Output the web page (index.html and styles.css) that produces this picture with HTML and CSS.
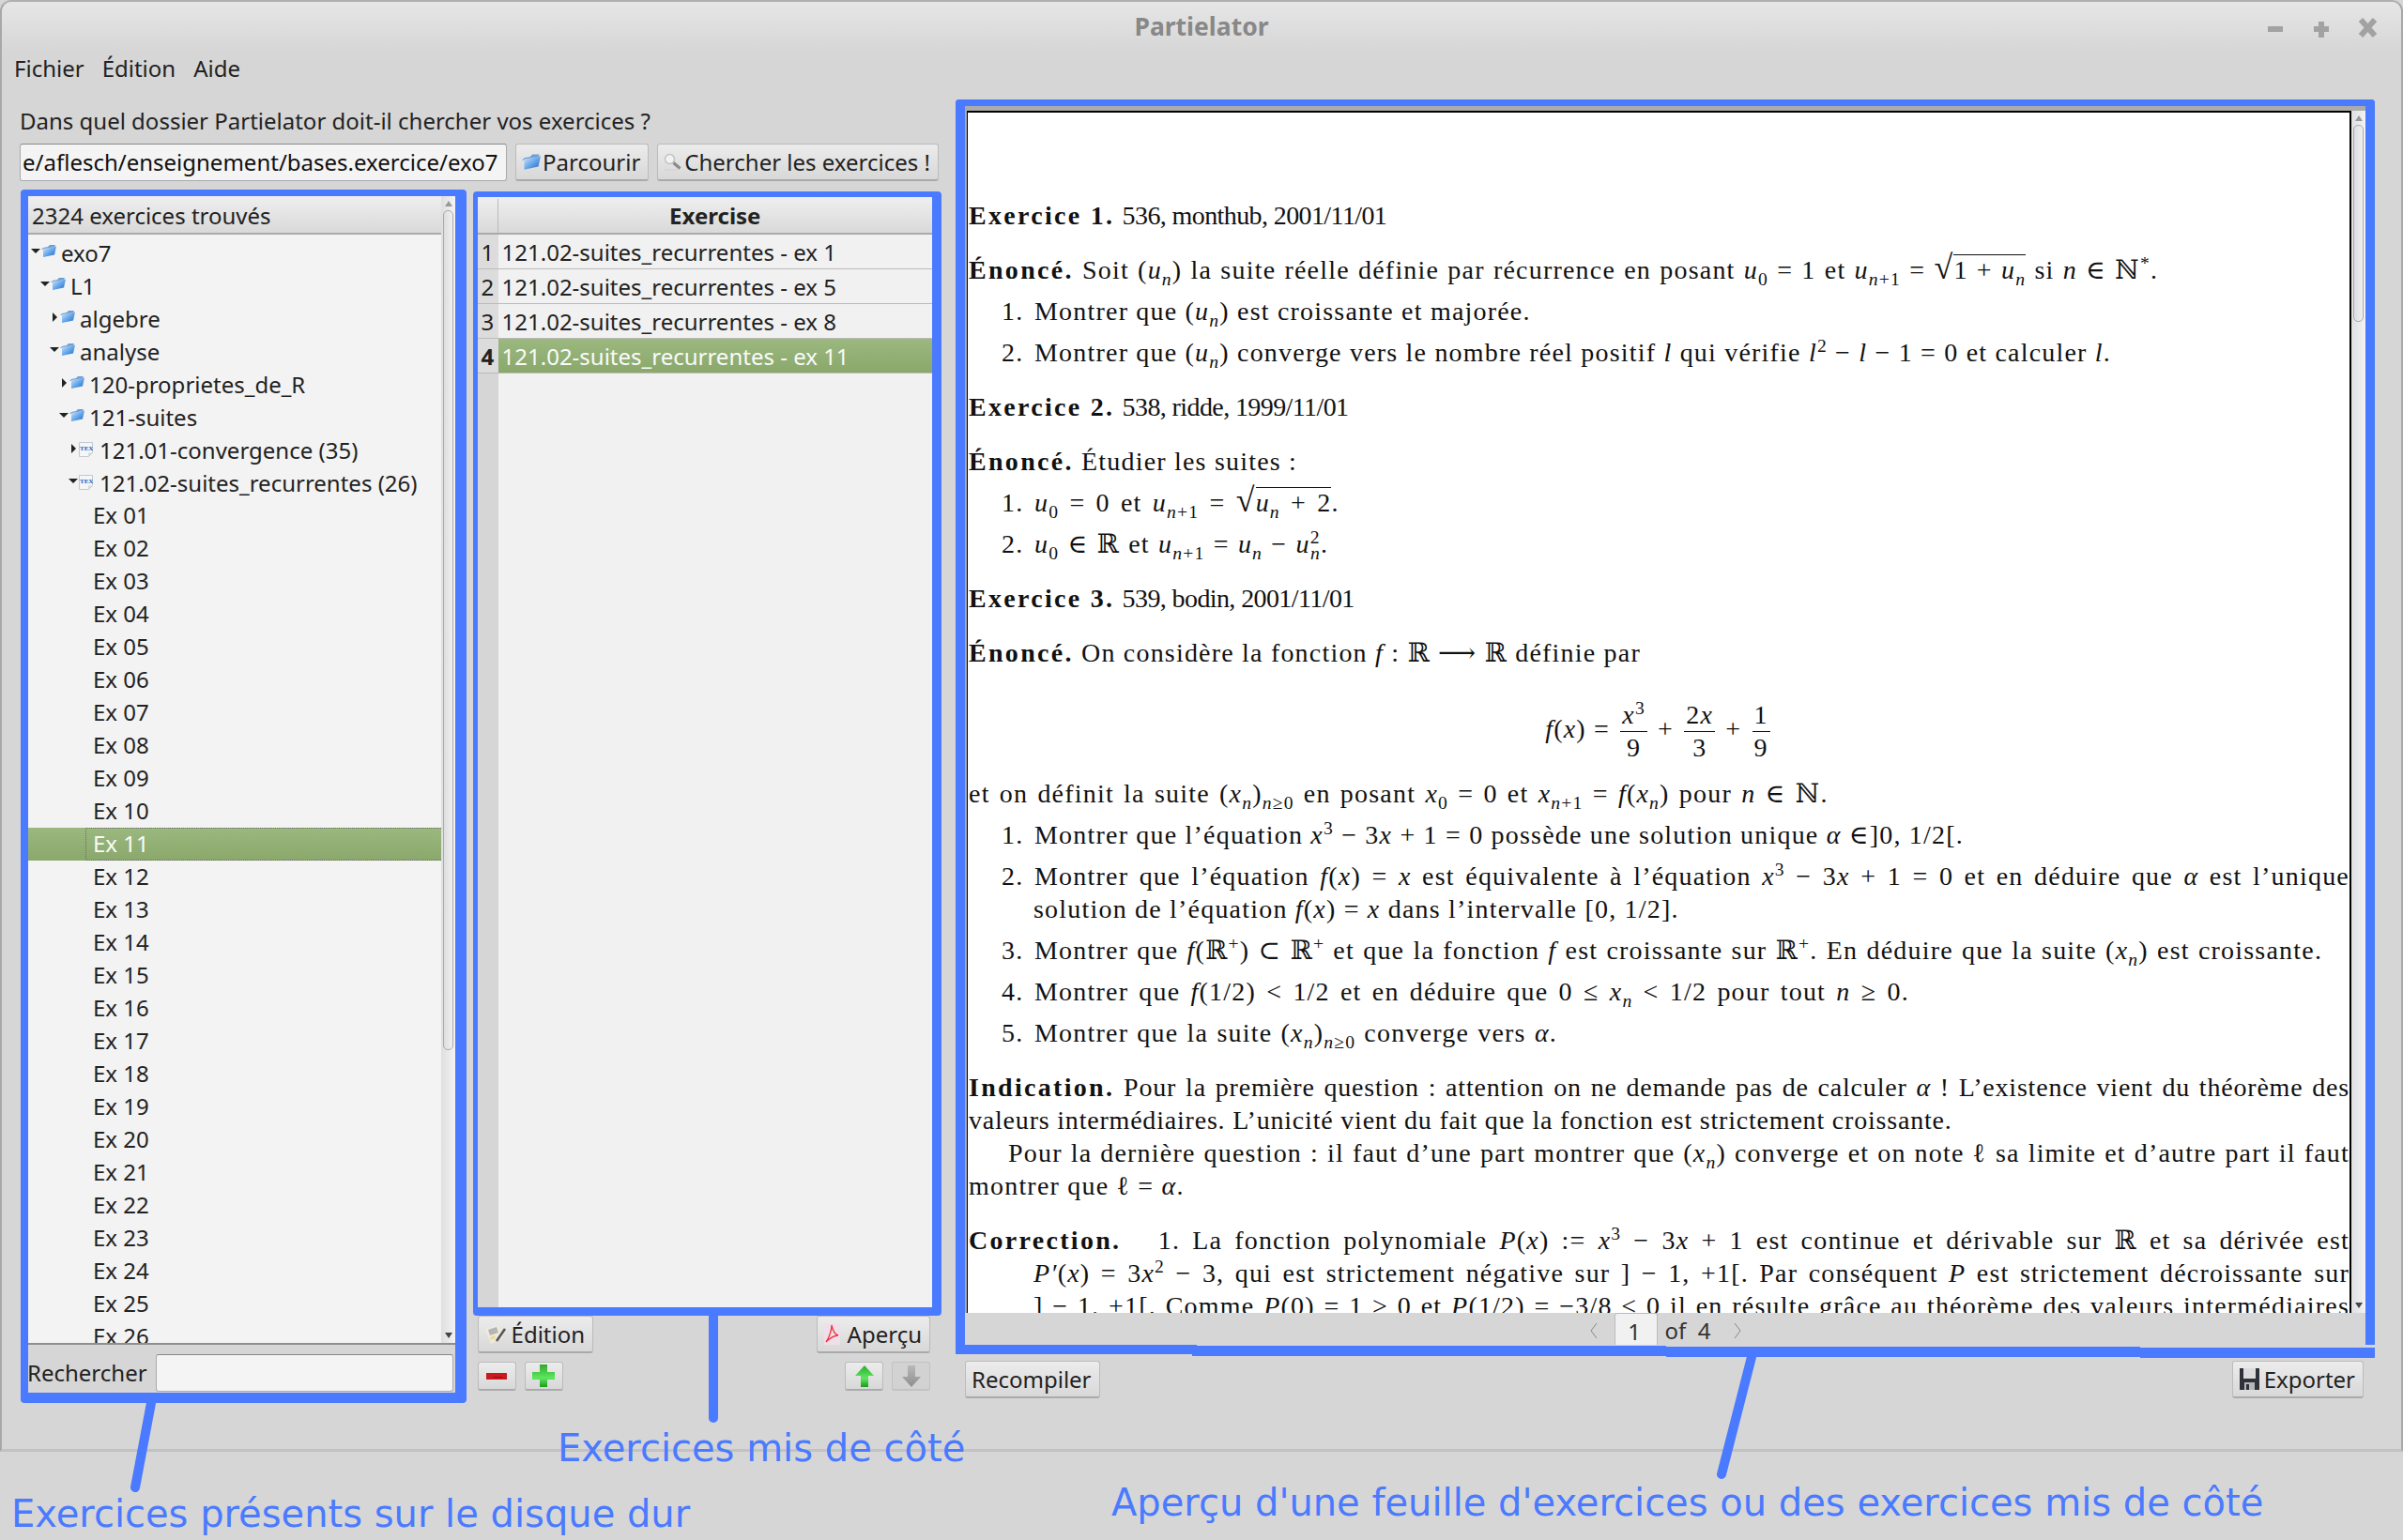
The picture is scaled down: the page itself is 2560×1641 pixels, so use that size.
FILE: index.html
```html
<!DOCTYPE html>
<html lang="fr">
<head>
    <meta charset="UTF-8">
    <title>Partielator</title>
    <link rel="stylesheet" href="styles.css">
</head>
<body>
    <svg class="defs" width="0" height="0">
        <defs>
            <linearGradient id="blue" x1="0" y1="0" x2="1" y2="1">
                <stop offset="0" stop-color="#d8eafc"/>
                <stop offset=".5" stop-color="#6aa8ea"/>
                <stop offset="1" stop-color="#1667c4"/>
            </linearGradient>
            <linearGradient id="green" x1="0" y1="0" x2="0" y2="1">
                <stop offset="0" stop-color="#2fa82f"/>
                <stop offset=".6" stop-color="#5ee85e"/>
                <stop offset="1" stop-color="#1c9a1c"/>
            </linearGradient>
            <linearGradient id="grey" x1="0" y1="0" x2="0" y2="1">
                <stop offset="0" stop-color="#b8b8b8"/>
                <stop offset="1" stop-color="#8e8e8e"/>
            </linearGradient>
            <symbol id="folder" viewBox="0 0 16 13">
                <path d="M0 5 2 3l5-1 2-2 6 0-1 2-8 2z" fill="#6d9fd6"/>
                <path d="M2 4 16 1.500l-2 9L2 13z" fill="url(#blue)"/>
            </symbol>
            <symbol id="doc" viewBox="0 0 15 16">
                <path d="M.5 .5h14v11l-4 4H.5z" fill="#f5f6f8" stroke="#c4c8d0"/>
                <path d="M14 11.500h-4v4z" fill="#d5d8de"/>
                <text x="1" y="9" class="tex">TEX</text>
            </symbol>
        </defs>
    </svg>

    <div class="window">
        <header class="titlebar">
            <span class="title">Partielator</span>
            <svg class="wm-buttons" viewBox="0 0 130 26">
                <path d="M0 13h16M49 13h16M57 5v17M99 3l15 17M114 3 99 20" />
            </svg>
        </header>
        <nav class="menubar"><span>Fichier</span><span>Édition</span><span>Aide</span></nav>

        <div class="columns">
            <div class="left-col">
                <div class="prompt">Dans quel dossier Partielator doit-il chercher vos exercices ?</div>
                <div class="path-row">
                    <div class="input path-input">e/aflesch/enseignement/bases.exercice/exo7</div>
                    <button class="btn"><svg class="ico ico-folder"><use href="#folder"/></svg>Parcourir</button>
                    <button class="btn btn-search">
                        <svg class="ico ico-lens" viewBox="0 0 20 20"><circle cx="6.500" cy="6.500" r="5" fill="#f2f2f2" stroke="#c2c2c2" stroke-width="1.500"/><path d="m10.500 10.500 7 6" stroke="#8a8a8a" stroke-width="3"/><path d="M1 18h13" stroke="#cfcfcf"/></svg>Chercher les exercices !
                    </button>
                </div>

                <div class="panels">
                    <section class="frame frame-tree">
                        <div class="tree-box">
                            <div class="tree">
                                <div class="tree-head">2324 exercices trouvés</div>
                                <div class="node d0"><i class="slot"><i class="tri open"></i></i><svg class="fi"><use href="#folder"/></svg>exo7</div>
                                <div class="node d1"><i class="slot"><i class="tri open"></i></i><svg class="fi"><use href="#folder"/></svg>L1</div>
                                <div class="node d2"><i class="slot"><i class="tri"></i></i><svg class="fi"><use href="#folder"/></svg>algebre</div>
                                <div class="node d2"><i class="slot"><i class="tri open"></i></i><svg class="fi"><use href="#folder"/></svg>analyse</div>
                                <div class="node d3"><i class="slot"><i class="tri"></i></i><svg class="fi"><use href="#folder"/></svg>120-proprietes_de_R</div>
                                <div class="node d3"><i class="slot"><i class="tri open"></i></i><svg class="fi"><use href="#folder"/></svg>121-suites</div>
                                <div class="node d4"><i class="slot"><i class="tri"></i></i><svg class="fi fi-doc"><use href="#doc"/></svg>121.01-convergence (35)</div>
                                <div class="node d4"><i class="slot"><i class="tri open"></i></i><svg class="fi fi-doc"><use href="#doc"/></svg>121.02-suites_recurrentes (26)</div>
                                <div class="leaf">Ex 01</div>
                                <div class="leaf">Ex 02</div>
                                <div class="leaf">Ex 03</div>
                                <div class="leaf">Ex 04</div>
                                <div class="leaf">Ex 05</div>
                                <div class="leaf">Ex 06</div>
                                <div class="leaf">Ex 07</div>
                                <div class="leaf">Ex 08</div>
                                <div class="leaf">Ex 09</div>
                                <div class="leaf">Ex 10</div>
                                <div class="leaf selected"><span class="focus">Ex 11</span></div>
                                <div class="leaf">Ex 12</div>
                                <div class="leaf">Ex 13</div>
                                <div class="leaf">Ex 14</div>
                                <div class="leaf">Ex 15</div>
                                <div class="leaf">Ex 16</div>
                                <div class="leaf">Ex 17</div>
                                <div class="leaf">Ex 18</div>
                                <div class="leaf">Ex 19</div>
                                <div class="leaf">Ex 20</div>
                                <div class="leaf">Ex 21</div>
                                <div class="leaf">Ex 22</div>
                                <div class="leaf">Ex 23</div>
                                <div class="leaf">Ex 24</div>
                                <div class="leaf">Ex 25</div>
                                <div class="leaf">Ex 26</div>
                            </div>
                            <div class="scrollbar tree-scroll"><i class="arrow up"></i><i class="thumb"></i><i class="arrow down"></i></div>
                        </div>
                        <div class="search-row">
                            <span>Rechercher</span>
                            <div class="input search-input"></div>
                        </div>
                    </section>

                    <div class="side">
                        <section class="frame frame-list">
                            <div class="list-head"><i class="corner"></i><b>Exercise</b></div>
                            <div class="list-row"><span class="num">1</span><span class="cell">121.02-suites_recurrentes - ex 1</span></div>
                            <div class="list-row"><span class="num">2</span><span class="cell">121.02-suites_recurrentes - ex 5</span></div>
                            <div class="list-row"><span class="num">3</span><span class="cell">121.02-suites_recurrentes - ex 8</span></div>
                            <div class="list-row current"><span class="num">4</span><span class="cell">121.02-suites_recurrentes - ex 11</span></div>
                            <div class="list-rest"><i class="corner"></i></div>
                        </section>
                        <div class="side-buttons">
                            <div class="side-col">
                                <button class="btn">
                                    <svg class="ico ico-edit" viewBox="0 0 24 24"><path d="M1 6 15 1l5 14-13 7z" fill="#eeeade"/><path d="M4 7l9-3 2 6-9 3z" fill="#b5b5b5"/><path d="M6 15l5-2 1 3-5 2z" fill="#ecdc8c"/><path d="m13 19 9-13" stroke="#555" stroke-width="2.500"/></svg>Édition
                                </button>
                                <div class="mini-row">
                                    <button class="mini"><svg class="mini-minus" viewBox="0 0 22 7"><path d="M0 0h22v7H0z" fill="#c9191f"/><path d="M8 4h9v1H8z" fill="#8d0d10"/></svg></button>
                                    <button class="mini"><svg class="mini-plus" viewBox="0 0 24 24"><path d="M8 0h8v8h8v8h-8v8H8v-8H0V8h8z" fill="url(#green)"/></svg></button>
                                </div>
                            </div>
                            <div class="side-col side-col-right">
                                <button class="btn">
                                    <svg class="ico ico-pdf" viewBox="0 0 17 23"><path d="M0 0h17v23H0z" fill="#f0dfea"/><path d="M8 2c0 6-3 14-6 18 3-3 7-7 13-7-4-1-6-6-7-11z" fill="none" stroke="#ee3a3e" stroke-width="1.300"/></svg>Aperçu
                                </button>
                                <div class="mini-row">
                                    <button class="mini"><svg class="mini-arrow" viewBox="0 0 20 23"><path d="M10 0l10 11h-6v12H6V11H0z" fill="url(#green)"/></svg></button>
                                    <button class="mini mini-off"><svg class="mini-arrow" viewBox="0 0 20 23"><path d="M10 23 0 12h6V0h8v12h6z" fill="url(#grey)"/></svg></button>
                                </div>
                            </div>
                        </div>
                    </div>
                </div>
            </div>

            <div class="right-col">
                <section class="frame-pdf">
                    <div class="pdf-wrap">
                        <div class="pdf-page">
                            <p class="ln gap-first"><b>Exercice 1.</b> <span class="meta">536, monthub, 2001/11/01</span></p>
                            <p class="ln g-sec ws1"><b>Énoncé.</b> Soit (<i>u<sub>n</sub></i>) la suite réelle définie par récurrence en posant <i>u</i><sub>0</sub> = 1 et <i>u<sub>n</sub></i><sub>+1</sub> = <span class="sqrt"><span class="radical">√</span><span class="rad">1 + <i>u<sub>n</sub></i></span></span> si <i>n</i> ∈ ℕ<sup>*</sup>.</p>
                            <p class="ln item g-item"><span class="n">1.</span>Montrer que (<i>u<sub>n</sub></i>) est croissante et majorée.</p>
                            <p class="ln item g-item"><span class="n">2.</span>Montrer que (<i>u<sub>n</sub></i>) converge vers le nombre réel positif <i>l</i> qui vérifie <i>l</i><sup>2</sup> − <i>l</i> − 1 = 0 et calculer <i>l</i>.</p>
                            <p class="ln g-sec"><b>Exercice 2.</b> <span class="meta">538, ridde, 1999/11/01</span></p>
                            <p class="ln g-sec"><b>Énoncé.</b> Étudier les suites :</p>
                            <p class="ln item g-item ws3"><span class="n">1.</span><i>u</i><sub>0</sub> = 0 et <i>u<sub>n</sub></i><sub>+1</sub> = <span class="sqrt"><span class="radical">√</span><span class="rad"><i>u<sub>n</sub></i> + 2</span></span>.</p>
                            <p class="ln item g-item ws1"><span class="n">2.</span><i>u</i><sub>0</sub> ∈ ℝ et <i>u<sub>n</sub></i><sub>+1</sub> = <i>u<sub>n</sub></i> − <i>u</i><sup>2</sup><sub class="tight"><i>n</i></sub>.</p>
                            <p class="ln g-sec"><b>Exercice 3.</b> <span class="meta">539, bodin, 2001/11/01</span></p>
                            <p class="ln g-sec"><b>Énoncé.</b> On considère la fonction <i>f</i> : ℝ ⟶ ℝ définie par</p>
                            <div class="display"><i>f</i>(<i>x</i>) = <span class="frac"><span><i>x</i><sup>3</sup></span><span>9</span></span> + <span class="frac"><span>2<i>x</i></span><span>3</span></span> + <span class="frac"><span>1</span><span>9</span></span></div>
                            <p class="ln g-after ws2">et on définit la suite (<i>x<sub>n</sub></i>)<sub><i>n</i>≥0</sub> en posant <i>x</i><sub>0</sub> = 0 et <i>x<sub>n</sub></i><sub>+1</sub> = <i>f</i>(<i>x<sub>n</sub></i>) pour <i>n</i> ∈ ℕ.</p>
                            <p class="ln item g-item"><span class="n">1.</span>Montrer que l’équation <i>x</i><sup>3</sup> − 3<i>x</i> + 1 = 0 possède une solution unique <i>α</i> ∈]0, 1/2[.</p>
                            <p class="ln item just g-item"><span class="n">2.</span>Montrer que l’équation <i>f</i>(<i>x</i>) = <i>x</i> est équivalente à l’équation <i>x</i><sup>3</sup> − 3<i>x</i> + 1 = 0 et en déduire que <i>α</i> est l’unique</p>
                            <p class="ln item cont">solution de l’équation <i>f</i>(<i>x</i>) = <i>x</i> dans l’intervalle [0, 1/2].</p>
                            <p class="ln item g-item ws1"><span class="n">3.</span>Montrer que <i>f</i>(ℝ<sup>+</sup>) ⊂ ℝ<sup>+</sup> et que la fonction <i>f</i> est croissante sur ℝ<sup>+</sup>. En déduire que la suite (<i>x<sub>n</sub></i>) est croissante.</p>
                            <p class="ln item g-item ws3"><span class="n">4.</span>Montrer que <i>f</i>(1/2) &lt; 1/2 et en déduire que 0 ≤ <i>x<sub>n</sub></i> &lt; 1/2 pour tout <i>n</i> ≥ 0.</p>
                            <p class="ln item g-item ws1"><span class="n">5.</span>Montrer que la suite (<i>x<sub>n</sub></i>)<sub><i>n</i>≥0</sub> converge vers <i>α</i>.</p>
                            <p class="ln just g-sec tighter"><b>Indication.</b> Pour la première question : attention on ne demande pas de calculer <i>α</i> ! L’existence vient du théorème des</p>
                            <p class="ln tighter">valeurs intermédiaires. L’unicité vient du fait que la fonction est strictement croissante.</p>
                            <p class="ln just indent">Pour la dernière question : il faut d’une part montrer que (<i>x<sub>n</sub></i>) converge et on note ℓ sa limite et d’autre part il faut</p>
                            <p class="ln">montrer que ℓ = <i>α</i>.</p>
                            <p class="ln just g-sec"><b>Correction.</b> &nbsp; 1. La fonction polynomiale <i>P</i>(<i>x</i>) := <i>x</i><sup>3</sup> − 3<i>x</i> + 1 est continue et dérivable sur ℝ et sa dérivée est</p>
                            <p class="ln just item cont"><i>P′</i>(<i>x</i>) = 3<i>x</i><sup>2</sup> − 3, qui est strictement négative sur ] − 1, +1[. Par conséquent <i>P</i> est strictement décroissante sur</p>
                            <p class="ln just item cont">] − 1, +1[. Comme <i>P</i>(0) = 1 &gt; 0 et <i>P</i>(1/2) = −3/8 &lt; 0 il en résulte grâce au théorème des valeurs intermédiaires</p>
                        </div>
                        <div class="scrollbar pdf-scroll"><i class="arrow up"></i><i class="thumb"></i><i class="arrow down"></i></div>
                    </div>
                    <div class="pager">
                        <svg class="chev chev-prev" viewBox="0 0 8 18"><path d="M7 1 1 9l6 8"/></svg><span class="page-tab">1</span><span class="of">of&nbsp; 4</span><svg class="chev" viewBox="0 0 8 18"><path d="m1 1 6 8-6 8"/></svg>
                    </div>
                </section>
                <div class="pdf-buttons">
                    <button class="btn">Recompiler</button>
                    <button class="btn">
                        <svg class="ico ico-save" viewBox="0 0 21 23"><path d="M0 0h21v23H0z" fill="#2f3238"/><path d="M4 0h13v11H4z" fill="#dcdcdc"/><path d="M5 15h11v8H5z" fill="#b4b6ba"/><path d="M7 17h3v6H7z" fill="#2f3238"/></svg>Exporter
                    </button>
                </div>
            </div>
        </div>
    </div>

    <!-- callouts drawn over the screenshot -->
    <svg class="callouts" viewBox="0 0 2560 1641">
        <rect x="1018" y="1433" width="257" height="10" />
        <rect x="1270" y="1434" width="505" height="11" />
        <rect x="1775" y="1435" width="505" height="11" />
        <rect x="2280" y="1436" width="250" height="11" />
        <path d="M161 1495 144 1585" />
        <path d="M760 1402V1511" />
        <path d="M1866 1446 1834 1571" />
    </svg>
    <div class="note note-disk">Exercices présents sur le disque dur</div>
    <div class="note note-side">Exercices mis de côté</div>
    <div class="note note-preview">Aperçu d'une feuille d'exercices ou des exercices mis de côté</div>
</body>
</html>
```

FILE: styles.css
```css
html, body {
    margin: 0;
    padding: 0;
}

body {
    position: relative;
    width: 2560px;
    height: 1641px;
    overflow: hidden;
    background-color: #d6d6d6;
    font-family: "Noto Sans", "Open Sans", sans-serif;
    font-size: 24px;
    color: #222;
}

.defs {
    position: absolute;
}

.window {
    height: 1547px;
    box-sizing: border-box;
    border: 2px solid #a8a8a8;
    border-bottom: 3px solid #c2c2c2;
    border-top-color: #b0b0b0;
    border-radius: 12px 12px 0 0;
    background-color: #d6d6d6;
    overflow: hidden;
}

.titlebar {
    position: relative;
    height: 53px;
    background: linear-gradient(#e6e6e6, #d6d6d6);
    text-align: center;
    line-height: 52px;
}

.title {
    font-size: 26.500px;
    font-weight: bold;
    color: #888;
}

.wm-buttons {
    position: absolute;
    top: 16px;
    left: 2414px;
    width: 130px;
    height: 26px;
}

.wm-buttons path {
    fill: none;
    stroke: #a2a2a2;
    stroke-width: 6;
}

.menubar {
    display: flex;
    gap: 19px;
    height: 36px;
    padding-left: 13px;
    line-height: 36px;
    color: #222;
}

.columns {
    display: flex;
    padding-left: 18px;
    gap: 15px;
}

.left-col {
    width: 983px;
    flex: none;
}

.prompt {
    height: 38px;
    margin-top: 19px;
    margin-left: 1px;
    line-height: 38px;
}

.path-row {
    display: flex;
    gap: 9px;
    height: 40px;
    margin-top: 5px;
    margin-left: 1px;
}

.input {
    box-sizing: border-box;
    background-color: #f4f4f4;
    border: 1px solid #aaa;
    border-top-color: #888;
    border-radius: 3px;
}

.path-input {
    width: 519px;
    padding-left: 2px;
    line-height: 38px;
    overflow: hidden;
    white-space: nowrap;
    color: #111;
}

.btn {
    display: inline-flex;
    align-items: center;
    height: 40px;
    padding: 0 8px 0 6px;
    font: inherit;
    color: #222;
    white-space: nowrap;
    background: linear-gradient(#ececec, #d8d8d8);
    border: 1px solid #bbb;
    border-bottom: 2px solid #aaa;
    border-radius: 3px;
}

.ico {
    flex: none;
}

.ico-folder {
    width: 20px;
    height: 17px;
    margin-right: 2px;
}

.ico-lens {
    width: 20px;
    height: 20px;
    margin-right: 2px;
}

.ico-edit {
    width: 24px;
    height: 24px;
    margin-right: 5px;
}

.ico-pdf {
    width: 17px;
    height: 23px;
    margin: 0 8px 0 1px;
}

.ico-save {
    width: 21px;
    height: 23px;
    margin: 0 5px 0 1px;
}

.panels {
    display: flex;
    margin-top: 9px;
    margin-left: 2px;
    gap: 7px;
}

.frame {
    box-sizing: border-box;
    border: 8px solid #4a7aff;
    border-radius: 4px;
}

.frame-tree {
    display: flex;
    flex-direction: column;
    width: 475px;
    height: 1293px;
    border-width: 7px 12px 11px 8px;
}

.tree-box {
    display: flex;
    flex: none;
    box-sizing: border-box;
    height: 1224px;
    background-color: #f3f3f3;
    border-bottom: 2px solid #8e8e8e;
    overflow: hidden;
}

.tree {
    flex: 1;
    min-width: 0;
}

.tree-head {
    box-sizing: border-box;
    height: 41px;
    margin-bottom: 2px;
    padding: 2px 0 0 4px;
    line-height: 37px;
    background: linear-gradient(#efefef, #d9d9d9);
    border-bottom: 2px solid #aaa;
}

.node, .leaf {
    box-sizing: border-box;
    height: 35px;
    line-height: 34px;
    white-space: nowrap;
}

.node {
    display: flex;
    align-items: center;
}

.d0 { padding-left: 3px; }
.d1 { padding-left: 13px; }
.d2 { padding-left: 23px; }
.d3 { padding-left: 33px; }
.d4 { padding-left: 43px; }

.slot {
    display: flex;
    align-items: center;
    justify-content: center;
    flex: none;
    width: 10px;
    height: 12px;
    margin: -4px 1px 0 0;
}

.tri {
    width: 0;
    height: 0;
    border-top: 5px solid transparent;
    border-bottom: 5px solid transparent;
    border-left: 5px solid #222;
}

.tri.open {
    border-left: 5px solid transparent;
    border-right: 5px solid transparent;
    border-top: 5px solid #222;
    border-bottom: 0;
}

.fi {
    flex: none;
    width: 16px;
    height: 13px;
    margin: -4px 5px 0 0;
}

.fi-doc {
    width: 15px;
    height: 16px;
    margin: -2px 7px 0 0;
}

.tex {
    font-family: "Liberation Serif", serif;
    font-size: 7px;
    font-weight: bold;
    fill: #1f5fc0;
}

.leaf {
    padding-left: 69px;
}

.leaf.selected {
    padding-left: 0;
    background: linear-gradient(#9bb97f, #8aa86b);
    color: #fafafa;
}

.focus {
    display: block;
    box-sizing: border-box;
    height: 35px;
    margin-left: 61px;
    padding-left: 7px;
    line-height: 32px;
    border: 1px dotted #6a6a6a;
    border-right: 0;
}

.scrollbar {
    position: relative;
    flex: none;
    width: 15px;
    background: linear-gradient(90deg, #dfdfdf, #f3f3f3);
}

.arrow {
    position: absolute;
    left: 4px;
    width: 0;
    height: 0;
    border-left: 4px solid transparent;
    border-right: 4px solid transparent;
}

.arrow.up {
    top: 5px;
    border-bottom: 6px solid #999;
}

.arrow.down {
    bottom: 5px;
    border-top: 6px solid #444;
}

.thumb {
    position: absolute;
    top: 15px;
    left: 2px;
    right: 2px;
    box-sizing: border-box;
    background: linear-gradient(90deg, #ddd, #f0f0f0);
    border: 1px solid #aaa;
    border-radius: 5px;
}

.tree-scroll .thumb {
    height: 895px;
}

.search-row {
    display: flex;
    align-items: center;
    justify-content: space-between;
    flex: 1;
    margin-left: -1px;
    padding: 8px 2px 0 0;
}

.search-input {
    width: 317px;
    height: 40px;
}

.side {
    width: 500px;
}

.frame-list {
    display: flex;
    flex-direction: column;
    height: 1198px;
    margin-top: 2px;
    background-color: #f1f1f1;
    border-width: 6px 10px 9px 5px;
}

.list-head {
    display: flex;
    flex: none;
    box-sizing: border-box;
    height: 40px;
    padding-top: 2px;
    line-height: 36px;
    background: linear-gradient(#efefef, #d9d9d9);
    border-bottom: 2px solid #aaa;
}

.list-head b {
    flex: 1;
    text-align: center;
}

.corner {
    display: block;
    flex: none;
    box-sizing: border-box;
    width: 22px;
    border-right: 1px solid #bbb;
}

.list-row {
    display: flex;
    box-sizing: border-box;
    height: 37px;
    line-height: 37px;
    border-bottom: 1px solid #bbb;
}

.num {
    flex: none;
    box-sizing: border-box;
    width: 22px;
    padding-left: 4px;
    background-color: #dcdcdc;
}

.cell {
    flex: 1;
    padding-left: 4px;
}

.current .num {
    font-weight: bold;
}

.current .cell {
    background: linear-gradient(#9bb97f, #8aa86b);
    color: #fafafa;
}

.list-rest {
    display: flex;
    flex: 1;
}

.list-rest .corner {
    background-color: #d6d6d6;
    border: 0;
}

.side-buttons {
    display: flex;
    justify-content: space-between;
    padding: 0 12px 0 5px;
}

.side-col {
    display: flex;
    flex-direction: column;
    gap: 9px;
}

.side-col-right {
    align-items: flex-end;
}

.mini-row {
    display: flex;
    gap: 9px;
}

.mini {
    display: flex;
    align-items: center;
    justify-content: center;
    box-sizing: border-box;
    width: 41px;
    height: 31px;
    padding: 0;
    background: linear-gradient(#ececec, #d8d8d8);
    border: 1px solid #bbb;
    border-bottom: 2px solid #aaa;
    border-radius: 3px;
}

.mini-off {
    background: #d2d2d2;
    border-color: #c2c2c2;
}

.mini-minus {
    width: 22px;
    height: 7px;
}

.mini-plus {
    width: 24px;
    height: 24px;
}

.mini-arrow {
    width: 20px;
    height: 23px;
}

.right-col {
    flex: 1;
    min-width: 0;
    padding-right: 28px;
}

.frame-pdf {
    box-sizing: border-box;
    height: 1327px;
    margin-top: 15px;
    border: 10px solid #4a7aff;
    border-top-width: 7px;
    border-bottom: 0;
    border-radius: 4px 4px 0 0;
}

.pdf-wrap {
    display: flex;
    box-sizing: border-box;
    height: 1286px;
    padding: 5px 0 0 2px;
    background-color: #ababab;
}

.pdf-page {
    flex: 1;
    min-width: 0;
    box-sizing: border-box;
    padding-left: 1px;
    overflow: hidden;
    background-color: #fff;
    border: 2px solid #000;
    border-width: 2px 2px 0 1px;
    color: #111;
    font-family: "Liberation Serif", "DejaVu Serif", serif;
    font-size: 28px;
    letter-spacing: 1.200px;
}

.pdf-page b {
    letter-spacing: 2.300px;
}

.meta {
    letter-spacing: -.600px;
}

.ln {
    height: 35px;
    margin: 0;
    line-height: 35px;
    white-space: nowrap;
}

.ln sub, .ln sup, .display sup {
    font-size: 70%;
    line-height: 0;
}

.tight {
    margin-left: -.55em;
}

.ws1 { word-spacing: 1px; }
.ws2 { word-spacing: 2px; }
.ws3 { word-spacing: 3px; }

.tighter {
    letter-spacing: .800px;
}

.gap-first { margin-top: 92px; }
.g-sec { margin-top: 23px; }
.g-item { margin-top: 9px; }
.g-after { margin-top: 11px; }

.item {
    padding-left: 69px;
}

.n {
    display: inline-block;
    width: 35px;
    margin-left: -34px;
}

.cont {
    margin-top: 0;
}

.indent {
    text-indent: 42px;
}

.just {
    white-space: normal;
    text-align: justify;
    text-align-last: justify;
    overflow: hidden;
}

.sqrt {
    white-space: nowrap;
}

.radical {
    font-size: 36px;
    line-height: 0;
}

.rad {
    border-top: 1px solid #111;
}

.display {
    height: 80px;
    margin-top: 24px;
    line-height: 80px;
    text-align: center;
    white-space: nowrap;
}

.frac {
    display: inline-flex;
    flex-direction: column;
    align-items: center;
    margin: 0 3px;
    line-height: 34px;
    vertical-align: middle;
}

.frac span:first-child {
    padding: 0 2px;
    border-bottom: 1px solid #111;
}

.pdf-scroll {
    width: 15px;
}

.pdf-scroll .thumb {
    height: 210px;
}

.pager {
    display: flex;
    align-items: stretch;
    justify-content: center;
    box-sizing: border-box;
    height: 34px;
    line-height: 30px;
    color: #333;
}

.chev {
    flex: none;
    width: 8px;
    height: 18px;
    margin: 10px 9px 0;
}

.chev-prev {
    margin-right: 18px;
}

.chev path {
    fill: none;
    stroke: #888;
}

.page-tab {
    box-sizing: border-box;
    width: 46px;
    padding: 4px 3px 0 0;
    text-align: center;
    background-color: #f1f1f1;
    border: 1px solid #bbb;
    border-bottom: 0;
    border-radius: 3px 3px 0 0;
}

.of {
    width: 56px;
    margin: 0 8px;
    padding-top: 4px;
}

.pdf-buttons {
    display: flex;
    justify-content: space-between;
    margin-top: 17px;
    padding: 0 12px 0 10px;
}

/* annotations */
.callouts {
    position: absolute;
    inset: 0;
    width: 2560px;
    height: 1641px;
    pointer-events: none;
}

.callouts rect {
    fill: #4a7aff;
}

.callouts path {
    fill: none;
    stroke: #4a7aff;
    stroke-width: 10;
    stroke-linecap: round;
}

.note {
    position: absolute;
    font-family: "DejaVu Sans", sans-serif;
    font-size: 40px;
    line-height: 50px;
    color: #4a7aff;
    white-space: nowrap;
}

.note-disk {
    left: 12px;
    top: 1588px;
}

.note-side {
    left: 594px;
    top: 1518px;
}

.note-preview {
    left: 1184px;
    top: 1576px;
}
```
